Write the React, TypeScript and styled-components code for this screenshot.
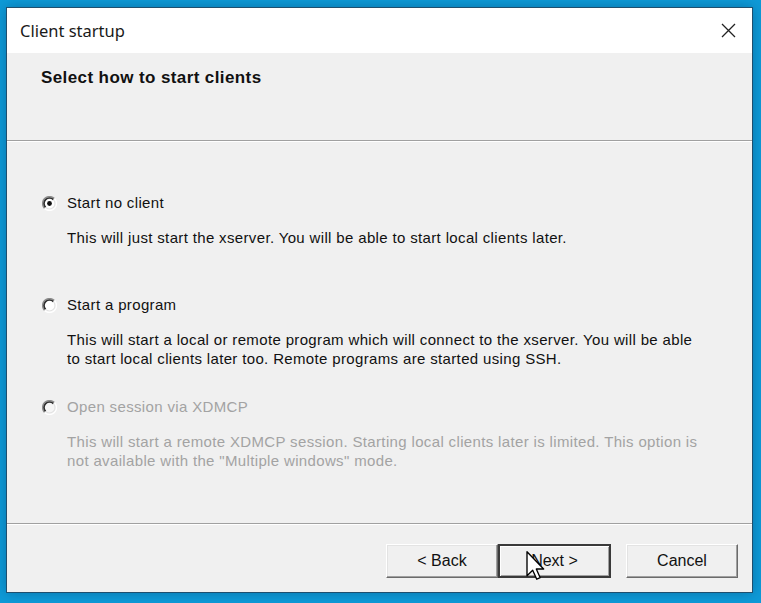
import styled, { createGlobalStyle } from "styled-components";

const Global = createGlobalStyle`
  html, body {
    margin: 0;
    padding: 0;
    background: #0e9bd8;
    height: 100%;
  }
  body {
    font-family: "Liberation Sans", Arial, sans-serif;
    overflow: hidden;
  }
  #root {
    padding: 7px 0 0 6px;
  }
`;

const Window = styled.div`
  width: 745px;
  height: 584px;
  border: 1px solid #1f4f6e;
  background: #f0f0f0;
  display: flex;
  flex-direction: column;
  box-shadow: 0 0 12px rgba(0, 40, 80, 0.35);
`;

const TitleBar = styled.div`
  height: 45px;
  background: #ffffff;
  display: flex;
  align-items: center;
  justify-content: space-between;
  padding: 0 16px 0 13px;
  font-family: "Noto Sans", "Open Sans", sans-serif;
  font-size: 16.5px;
  color: #1a1a1a;
`;

const Header = styled.div`
  height: 87px;
  padding: 15px 0 0 34px;
  box-sizing: border-box;
  font-size: 17px;
  letter-spacing: 0.4px;
  font-weight: bold;
  color: #111;
`;

const Separator = styled.div`
  height: 1px;
  background: #a0a0a0;
  border-bottom: 1px solid #ffffff;
`;

const Content = styled.div`
  flex: 1;
  padding: 51px 0 0 35px;
  display: flex;
  flex-direction: column;
  gap: 29px;
`;

const Option = styled.div<{ $disabled?: boolean }>`
  display: flex;
  flex-direction: column;
  color: ${(p) => (p.$disabled ? "#a3a3a3" : "#111")};
  font-size: 15px;
  letter-spacing: 0.35px;
`;

const Label = styled.div`
  display: flex;
  align-items: center;
  gap: 10px;
  height: 20px;
  line-height: 20px;
`;

const Description = styled.div`
  margin: 15px 0 0 25px;
  line-height: 19px;
  min-height: 38px;
`;

const Footer = styled.div`
  height: 67px;
  display: flex;
  justify-content: flex-end;
  align-items: flex-start;
  padding: 19px 14px 0 0;
  box-sizing: border-box;
`;

const ButtonGroup = styled.div`
  display: flex;
  margin-right: 15px;
`;

const Button = styled.div<{ $default?: boolean }>`
  position: relative;
  box-sizing: border-box;
  width: ${(p) => (p.$default ? "113px" : "112px")};
  height: 34px;
  display: flex;
  align-items: center;
  justify-content: center;
  background: #f0f0f0;
  font-size: 16px;
  color: #111;
  border-style: solid;
  border-width: ${(p) => (p.$default ? "2px" : "1px")};
  border-color: ${(p) =>
    p.$default ? "#3a3a3a" : "#ffffff #6b6b6b #6b6b6b #ffffff"};
  box-shadow: ${(p) =>
    p.$default
      ? "inset 1px 1px 0 #ffffff, inset -1px -1px 0 #a0a0a0"
      : "inset -1px -1px 0 #a0a0a0, inset 1px 1px 0 #e3e3e3"};
`;

const Cursor = styled.svg`
  position: absolute;
  left: 26px;
  top: 5px;
`;

function Radio({ checked, disabled }: { checked?: boolean; disabled?: boolean }) {
  return (
    <svg width="15" height="15" viewBox="0 0 15 15">
      <circle cx="7.5" cy="7.5" r="6.5" fill={disabled ? "#f6f6f6" : "#ffffff"} />
      <path d="M12.45 2.55 A7 7 0 0 0 2.55 12.45" fill="none" stroke="#8c8c8c" strokeWidth="1.3" />
      <path d="M11.4 3.6 A5.5 5.5 0 0 0 3.6 11.4" fill="none" stroke="#2e2e2e" strokeWidth="1.7" />
      <path d="M12.45 2.55 A7 7 0 0 1 2.55 12.45" fill="none" stroke="#ffffff" strokeWidth="1.3" />
      <path d="M11.4 3.6 A5.5 5.5 0 0 1 3.6 11.4" fill="none" stroke="#e2e2e2" strokeWidth="1.2" />
      {checked && <circle cx="7.5" cy="7.5" r="2.4" fill="#111" />}
    </svg>
  );
}

export default function App() {
  return (
    <>
      <Global />
      <Window>
        <TitleBar>
          <span>Client startup</span>
          <svg width="15" height="15" viewBox="0 0 15 15">
            <path d="M1 1 L14 14 M14 1 L1 14" stroke="#222" strokeWidth="1.3" />
          </svg>
        </TitleBar>
        <Header>Select how to start clients</Header>
        <Separator />
        <Content>
          <Option>
            <Label>
              <Radio checked />
              Start no client
            </Label>
            <Description>
              This will just start the xserver. You will be able to start local clients later.
            </Description>
          </Option>
          <Option>
            <Label>
              <Radio />
              Start a program
            </Label>
            <Description>
              This will start a local or remote program which will connect to the xserver. You will be able
              <br />
              to start local clients later too. Remote programs are started using SSH.
            </Description>
          </Option>
          <Option $disabled>
            <Label>
              <Radio disabled />
              Open session via XDMCP
            </Label>
            <Description>
              This will start a remote XDMCP session. Starting local clients later is limited. This option is
              <br />
              not available with the "Multiple windows" mode.
            </Description>
          </Option>
        </Content>
        <Separator />
        <Footer>
          <ButtonGroup>
            <Button>&lt; Back</Button>
            <Button $default>
              Next &gt;
              <Cursor width="20" height="30" viewBox="0 0 13 20">
                <path
                  d="M0.5 0.5 L0.5 16.5 L4.3 12.8 L7 18.8 L9.3 17.8 L6.7 12 L11.6 12 Z"
                  fill="#ffffff"
                  stroke="#000"
                  strokeWidth="0.9"
                  strokeLinejoin="round"
                />
              </Cursor>
            </Button>
          </ButtonGroup>
          <Button>Cancel</Button>
        </Footer>
      </Window>
    </>
  );
}
